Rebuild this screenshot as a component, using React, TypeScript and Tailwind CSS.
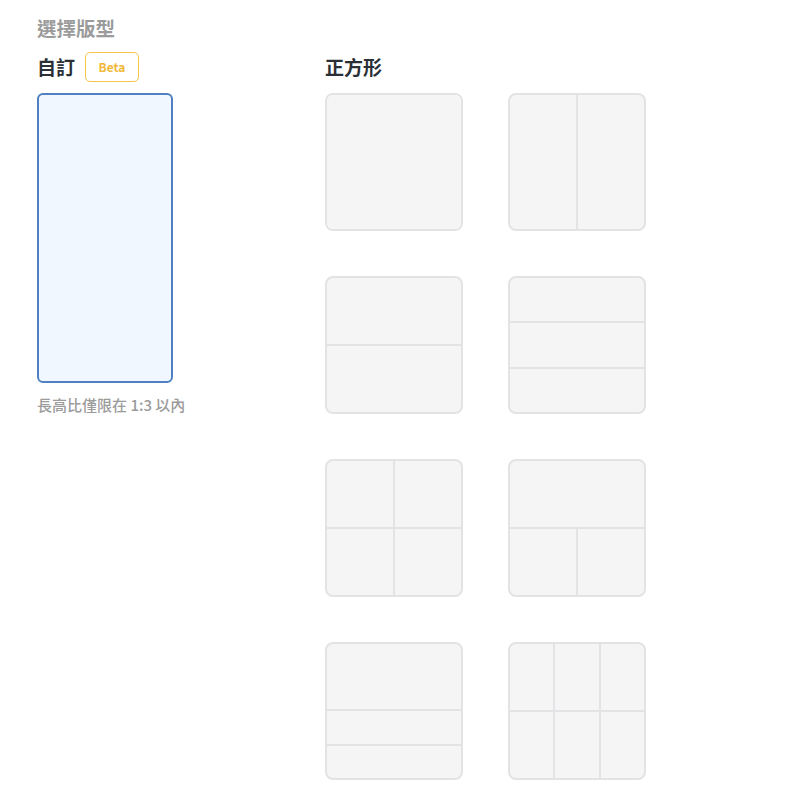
import React from "react";

const font = { fontFamily: '"Noto Sans CJK TC", "Noto Sans", sans-serif' };

function Tile({ cls, cells }: { cls: string; cells: string[] }) {
  return (
    <div className="w-[138px] h-[138px] rounded-[8px] border-2 border-[#e3e3e6] bg-[#e3e3e6] overflow-hidden">
      <div className={`grid h-full w-full gap-[2px] ${cls}`}>
        {cells.map((c, i) => (
          <div key={i} className={`bg-[#f5f5f5] ${c}`} />
        ))}
      </div>
    </div>
  );
}

export default function App() {
  return (
    <div className="w-[795px] h-[795px] bg-white pl-[37px] pt-[14px]" style={font}>
      <div className="text-[19.5px] leading-[28px] font-bold text-[#9b9b9b]">選擇版型</div>
      <div className="flex mt-[10px]">
        <div className="w-[136px]">
          <div className="flex items-center h-[30px] gap-[10px]">
            <span className="text-[19px] font-bold text-[#2b2f36]">自訂</span>
            <span className="h-[30px] w-[54px] flex items-center justify-center rounded-[5px] border border-[#f3c64a] text-[12px] font-bold text-[#f0b938]">
              Beta
            </span>
          </div>
          <div className="mt-[11px] w-[136px] h-[290px] rounded-[6px] border-2 border-[#4f81c2] bg-[#f0f7fe]" />
          <div className="mt-[11px] text-[15px] font-medium text-[#9b9b9b] whitespace-nowrap">長高比僅限在 1:3 以內</div>
        </div>
        <div className="ml-[152px]">
          <div className="h-[30px] flex items-center text-[19px] font-bold text-[#2b2f36]">正方形</div>
          <div className="mt-[11px] grid grid-cols-[138px_138px] gap-x-[45px] gap-y-[45px]">
            <Tile cls="grid-cols-1" cells={[""]} />
            <Tile cls="grid-cols-2" cells={["", ""]} />
            <Tile cls="grid-rows-2" cells={["", ""]} />
            <Tile cls="grid-rows-3" cells={["", "", ""]} />
            <Tile cls="grid-cols-2 grid-rows-2" cells={["", "", "", ""]} />
            <Tile cls="grid-cols-2 grid-rows-2" cells={["col-span-2", "", ""]} />
            <Tile cls="grid-rows-[2fr_1fr_1fr]" cells={["", "", ""]} />
            <Tile cls="grid-cols-3 grid-rows-2" cells={["", "", "", "", "", ""]} />
          </div>
        </div>
      </div>
    </div>
  );
}
